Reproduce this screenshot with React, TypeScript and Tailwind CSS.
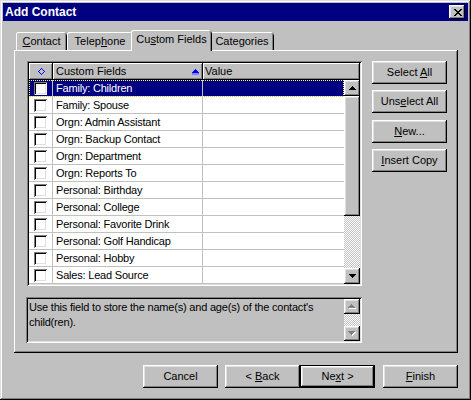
import React from "react";

const FONT = "font-['Liberation_Sans',Arial,sans-serif]";

const RAISED =
  "shadow-[inset_-1px_-1px_#000,inset_1px_1px_#fff,inset_-2px_-2px_#808080,inset_2px_2px_#dfdfdf]";
const SUNKEN =
  "shadow-[inset_1px_1px_#808080,inset_-1px_-1px_#fff,inset_2px_2px_#000,inset_-2px_-2px_#dfdfdf]";

function Pix({ map, color, w, h }: { map: string[]; color: string; w: number; h: number }) {
  return (
    <svg width={w} height={h} shapeRendering="crispEdges" className="block">
      {map.flatMap((r, y) =>
        r.split("").map((c, x) =>
          c === "1" ? <rect key={`${x}-${y}`} x={x} y={y} width={1} height={1} fill={color} /> : null
        )
      )}
    </svg>
  );
}

const CLOSE = ["11000011", "01100110", "00111100", "00011000", "00111100", "01100110", "11000011"];
const UP = ["0001000", "0011100", "0111110", "1111111"];
const DOWN = ["1111111", "0111110", "0011100", "0001000"];
const DIAMOND = ["0001000", "0010100", "0100010", "1000001", "0100010", "0010100", "0001000"];

function U({ c }: { c: string }) {
  return <span className="underline decoration-1 underline-offset-[1px]">{c}</span>;
}

function Btn({ children, className = "", def = false }: { children: React.ReactNode; className?: string; def?: boolean }) {
  const sh = def
    ? "shadow-[inset_0_0_0_1px_#000,inset_-2px_-2px_#000,inset_2px_2px_#fff,inset_-3px_-3px_#808080,inset_3px_3px_#dfdfdf]"
    : RAISED;
  return (
    <div className={`flex items-center justify-center w-[75px] h-[23px] bg-[#c0c0c0] text-[11px] text-black leading-none ${sh} ${className}`}>
      <span className="whitespace-pre">{children}</span>
    </div>
  );
}

function ScrollBtn({ dir, disabled = false, h = 16 }: { dir: "up" | "down"; disabled?: boolean; h?: number }) {
  return (
    <div className={`w-[16px] ${h === 16 ? "h-[16px]" : "h-[15px]"} bg-[#c0c0c0] flex items-center justify-center ${RAISED}`}>
      {disabled ? (
        <div className="relative w-[8px] h-[5px]">
          <div className="absolute left-[1px] top-[1px]">
            <Pix map={dir === "up" ? UP : DOWN} color="#fff" w={7} h={4} />
          </div>
          <div className="absolute left-0 top-0">
            <Pix map={dir === "up" ? UP : DOWN} color="#808080" w={7} h={4} />
          </div>
        </div>
      ) : (
        <Pix map={dir === "up" ? UP : DOWN} color="#000" w={7} h={4} />
      )}
    </div>
  );
}

const DITHER = "bg-[repeating-conic-gradient(#c0c0c0_0%_25%,#ffffff_0%_50%)] bg-[length:2px_2px]";

const rows = [
  "Family: Children",
  "Family: Spouse",
  "Orgn: Admin Assistant",
  "Orgn: Backup Contact",
  "Orgn: Department",
  "Orgn: Reports To",
  "Personal: Birthday",
  "Personal: College",
  "Personal: Favorite Drink",
  "Personal: Golf Handicap",
  "Personal: Hobby",
  "Sales: Lead Source",
];

function Check() {
  return (
    <div className="w-[13px] h-[13px] bg-white shadow-[inset_1px_1px_#808080,inset_-1px_-1px_#fff,inset_2px_2px_#000,inset_-2px_-2px_#dfdfdf]" />
  );
}

function Tab({ children, w, sel = false }: { children: React.ReactNode; w: string; sel?: boolean }) {
  return (
    <div
      className={`${w} ${
        sel ? "h-[21px] mb-[-1px] mx-[-2px] relative z-10 pb-[2px]" : "h-[18px]"
      } flex items-center justify-center bg-[#c0c0c0] rounded-t-[3px] text-[11px] leading-none text-black shadow-[inset_1px_0_#fff,inset_0_1px_#fff,inset_-1px_0_#000,inset_-2px_0_#808080]`}
    >
      <span className="whitespace-pre">{children}</span>
    </div>
  );
}

const HEAD = "shadow-[inset_-1px_-1px_#000,inset_1px_1px_#fff,inset_-2px_-2px_#808080]";

export default function App() {
  return (
    <div className={`${FONT} w-[471px] h-[400px] bg-[#c0c0c0] p-[3px] flex flex-col shadow-[inset_-1px_-1px_#000,inset_1px_1px_#dfdfdf,inset_-2px_-2px_#808080,inset_2px_2px_#fff]`}>
      {/* Title bar */}
      <div className="h-[18px] bg-[#000080] flex items-center justify-between pl-[2px] pr-[3px]">
        <span className="text-white font-bold text-[12px] leading-none">Add Contact</span>
        <div className={`w-[16px] h-[14px] bg-[#c0c0c0] flex items-center justify-center pl-[1px] ${RAISED}`}>
          <Pix map={CLOSE} color="#000" w={8} h={7} />
        </div>
      </div>

      {/* Body */}
      <div className="flex flex-col pl-[11px] pr-[10px]">
        {/* Tabs */}
        <div className="mt-[9px] h-[20px] flex items-end pl-[2px]">
          <Tab w="w-[51px]">
            <U c="C" />ontact
          </Tab>
          <Tab w="w-[66px]">
            Telep<U c="h" />one
          </Tab>
          <Tab w="w-[81px]" sel>
            Cu<U c="s" />tom Fields
          </Tab>
          <Tab w="w-[64px]">Categories</Tab>
        </div>

        {/* Panel */}
        <div className="h-[303px] w-[444px] flex pl-[13px] pt-[11px] shadow-[inset_-1px_-1px_#000,inset_1px_1px_#fff,inset_-2px_-2px_#808080]">
          <div className="flex flex-col w-[335px]">
            {/* List */}
            <div className={`w-[335px] h-[225px] bg-white p-[2px] ${SUNKEN}`}>
              <div className="flex h-[17px] text-[11px] leading-none text-black">
                <div className={`w-[24px] h-[17px] bg-[#c0c0c0] flex items-center justify-center ${HEAD}`}>
                  <Pix map={DIAMOND} color="#0000ff" w={7} h={7} />
                </div>
                <div className={`w-[150px] h-[17px] bg-[#c0c0c0] flex items-center justify-between pl-[3px] pr-[4px] ${HEAD}`}>
                  <span>Custom Fields</span>
                  <div className="relative w-[7px] h-[6px]">
                    <Pix map={["0001000", "0011100", "0111110", "1111111", "0000000", "0000000"]} color="#0000ff" w={7} h={6} />
                    <div className="absolute left-0 top-[4px] w-[7px] h-[2px] bg-[#8080ff]" />
                  </div>
                </div>
                <div className={`w-[157px] h-[17px] bg-[#c0c0c0] flex items-center pl-[2px] ${HEAD}`}>
                  <span>Value</span>
                </div>
              </div>
              <div className="flex">
                <div className="w-[315px] flex flex-col">
                  {rows.map((r, i) => {
                    const sel = i === 0;
                    return (
                      <div
                        key={r}
                        className={`flex h-[17px] border-b border-[#c0c0c0] text-[11px] leading-none ${
                          sel ? "bg-[#000080] text-white outline-1 outline-dotted outline-[#ffff80] -outline-offset-1" : "text-black"
                        }`}
                      >
                        <div className="w-[24px] h-[16px] border-r border-[#c0c0c0] flex items-center justify-center">
                          <Check />
                        </div>
                        <div className="w-[150px] h-[16px] border-r border-[#c0c0c0] flex items-center pl-[3px] tracking-[-0.2px]">
                          {r}
                        </div>
                        <div className="w-[141px] h-[16px]" />
                      </div>
                    );
                  })}
                </div>
                <div className="w-[16px] h-[204px] flex flex-col">
                  <ScrollBtn dir="up" />
                  <div className={`w-[16px] h-[120px] bg-[#c0c0c0] ${RAISED}`} />
                  <div className={`flex-1 ${DITHER}`} />
                  <ScrollBtn dir="down" />
                </div>
              </div>
            </div>

            {/* Description */}
            <div className={`mt-[11px] -ml-[1px] w-[336px] h-[46px] bg-[#c0c0c0] p-[2px] flex ${SUNKEN}`}>
              <div className="flex-1 pl-[1px] pt-[1px] text-[11px] leading-[15px] text-black tracking-[-0.2px]">
                Use this field to store the name(s) and age(s) of the contact's
                <br />
                child(ren).
              </div>
              <div className="w-[16px] flex flex-col">
                <ScrollBtn dir="up" disabled h={15} />
                <div className={`flex-1 ${DITHER}`} />
                <ScrollBtn dir="down" disabled h={15} />
              </div>
            </div>
          </div>

          {/* Right buttons */}
          <div className="ml-[10px] flex flex-col">
            <Btn>Select <U c="A" />ll</Btn>
            <Btn className="mt-[6px]">Uns<U c="e" />lect All</Btn>
            <Btn className="mt-[7px]"><U c="N" />ew...</Btn>
            <Btn className="mt-[6px]"><U c="I" />nsert Copy</Btn>
          </div>
        </div>

        {/* Bottom buttons */}
        <div className="mt-[12px] flex justify-end">
          <Btn>Cancel</Btn>
          <Btn className="ml-[7px]">{"< "}<U c="B" />ack</Btn>
          <Btn def>Ne<U c="x" />t {">"}</Btn>
          <Btn className="ml-[8px]"><U c="F" />inish</Btn>
        </div>
      </div>
    </div>
  );
}
